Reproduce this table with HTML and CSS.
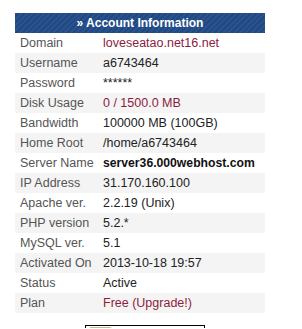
FILE: index.html
```html
<!DOCTYPE html>
<html lang="en">
<head>
    <meta charset="UTF-8">
    <title>Account Information</title>
    <link rel="stylesheet" href="styles.css">
</head>
<body>
    <div class="panel">
        <div class="panel-title">&raquo; Account Information</div>
        <table class="info">
            <tr><td class="label">Domain</td><td class="value red">loveseatao.net16.net</td></tr>
            <tr><td class="label">Username</td><td class="value">a6743464</td></tr>
            <tr><td class="label">Password</td><td class="value">******</td></tr>
            <tr><td class="label">Disk Usage</td><td class="value red">0 / 1500.0 MB</td></tr>
            <tr><td class="label">Bandwidth</td><td class="value">100000 MB (100GB)</td></tr>
            <tr><td class="label">Home Root</td><td class="value">/home/a6743464</td></tr>
            <tr><td class="label">Server Name</td><td class="value bold">server36.000webhost.com</td></tr>
            <tr><td class="label">IP Address</td><td class="value">31.170.160.100</td></tr>
            <tr><td class="label">Apache ver.</td><td class="value">2.2.19 (Unix)</td></tr>
            <tr><td class="label">PHP version</td><td class="value">5.2.*</td></tr>
            <tr><td class="label">MySQL ver.</td><td class="value">5.1</td></tr>
            <tr><td class="label">Activated On</td><td class="value">2013-10-18 19:57</td></tr>
            <tr><td class="label">Status</td><td class="value">Active</td></tr>
            <tr><td class="label">Plan</td><td class="value red">Free (Upgrade!)</td></tr>
        </table>
        <div class="banner"><span class="banner-pic"></span></div>
    </div>
</body>
</html>
```

FILE: styles.css
```css
body {
    margin: 0;
    padding: 13px 0 0 15px;
    background-color: #fff;
    font-family: 'Liberation Sans', Arial, sans-serif;
    overflow: hidden;
}
.panel {
    width: 250px;
}
.panel-title {
    height: 20px;
    line-height: 20px;
    text-align: center;
    color: #fff;
    font-weight: bold;
    font-size: 12px;
    background-color: #214b87;
    background-image: repeating-linear-gradient(135deg, rgba(255,255,255,0.04) 0 2px, rgba(0,0,0,0.04) 2px 4px);
}
.info {
    width: 100%;
    border-collapse: collapse;
    font-size: 12.5px;
}
.info tr {
    height: 20px;
}
.info tr:nth-child(even) {
    background-color: #f4f4f4;
}
.info td {
    padding: 0;
    line-height: 20px;
    white-space: nowrap;
}
.label {
    width: 83px;
    padding-left: 5px !important;
    color: #555;
}
.value {
    color: #222;
}
.red {
    color: #8c1c3c;
}
.bold {
    font-weight: bold;
    font-size: 12.2px;
    color: #111;
}
.banner {
    margin: 12px 0 0 70px;
    width: 118px;
    height: 2px;
    border-top: 1px solid #000;
    border-left: 1px solid #000;
    border-right: 1px solid #000;
    overflow: hidden;
}
.banner-pic {
    display: block;
    width: 24px;
    height: 4px;
    margin: 1px 0 0 3px;
    background-color: #d9b48a;
    border-radius: 6px 10px 0 0;
}
```
